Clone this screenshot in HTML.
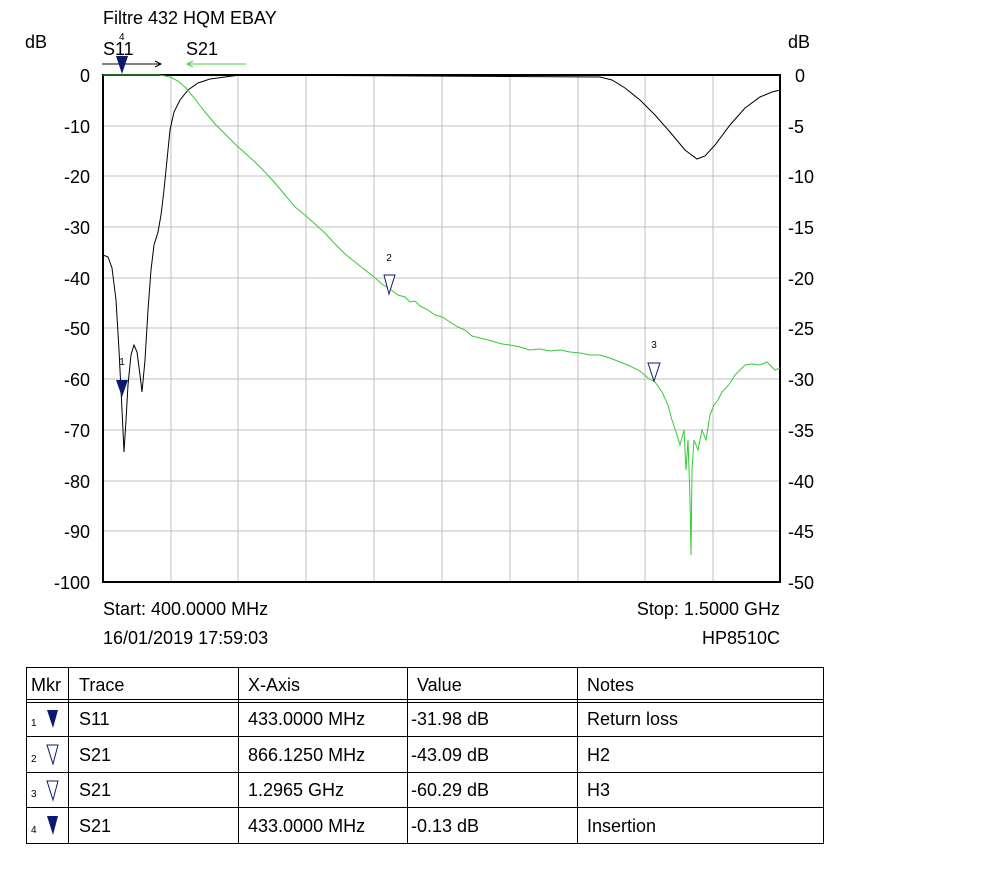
<!DOCTYPE html>
<html><head><meta charset="utf-8"><style>
html,body{margin:0;padding:0;background:#fff;width:1008px;height:880px;overflow:hidden}
text{font-family:"Liberation Sans",sans-serif;fill:#000}
</style></head><body>
<svg width="1008" height="880" xmlns="http://www.w3.org/2000/svg">
<!-- grid -->
<g stroke="#c0c0c0" stroke-width="1">
<line x1="171" y1="75" x2="171" y2="582"/><line x1="238" y1="75" x2="238" y2="582"/>
<line x1="306" y1="75" x2="306" y2="582"/><line x1="374" y1="75" x2="374" y2="582"/>
<line x1="442" y1="75" x2="442" y2="582"/><line x1="510" y1="75" x2="510" y2="582"/>
<line x1="578" y1="75" x2="578" y2="582"/><line x1="645" y1="75" x2="645" y2="582"/>
<line x1="713" y1="75" x2="713" y2="582"/>
<line x1="103" y1="126" x2="780" y2="126"/><line x1="103" y1="176" x2="780" y2="176"/>
<line x1="103" y1="227" x2="780" y2="227"/><line x1="103" y1="278" x2="780" y2="278"/>
<line x1="103" y1="328" x2="780" y2="328"/><line x1="103" y1="379" x2="780" y2="379"/>
<line x1="103" y1="430" x2="780" y2="430"/><line x1="103" y1="481" x2="780" y2="481"/>
<line x1="103" y1="531" x2="780" y2="531"/>
</g>
<rect x="103" y="75" width="677" height="507" fill="none" stroke="#000" stroke-width="2"/>
<!-- labels -->
<text x="103" y="24" font-size="18">Filtre 432 HQM EBAY</text>
<text x="25" y="48" font-size="18">dB</text>
<text x="788" y="48" font-size="18">dB</text>
<text x="103" y="55" font-size="18">S11</text>
<text x="186" y="55" font-size="18">S21</text>
<text x="119" y="40" font-size="10" fill="#666">4</text>
<line x1="102" y1="64" x2="160" y2="64" stroke="#000"/><path d="M155,61 L161,64 L155,67" fill="none" stroke="#000"/>
<line x1="188" y1="64" x2="246" y2="64" stroke="#4c4"/><path d="M193,61 L187,64 L193,67" fill="none" stroke="#4c4"/>
<g font-size="18" text-anchor="end">
<text x="90" y="82">0</text><text x="90" y="133">-10</text><text x="90" y="183">-20</text>
<text x="90" y="234">-30</text><text x="90" y="285">-40</text><text x="90" y="335">-50</text>
<text x="90" y="386">-60</text><text x="90" y="437">-70</text><text x="90" y="488">-80</text>
<text x="90" y="538">-90</text><text x="90" y="589">-100</text>
</g>
<g font-size="18">
<text x="795" y="82">0</text><text x="788" y="133">-5</text><text x="788" y="183">-10</text>
<text x="788" y="234">-15</text><text x="788" y="285">-20</text><text x="788" y="335">-25</text>
<text x="788" y="386">-30</text><text x="788" y="437">-35</text><text x="788" y="488">-40</text>
<text x="788" y="538">-45</text><text x="788" y="589">-50</text>
</g>
<text x="103" y="615" font-size="18">Start: 400.0000 MHz</text>
<text x="103" y="644" font-size="18">16/01/2019 17:59:03</text>
<text x="780" y="615" font-size="18" text-anchor="end">Stop: 1.5000 GHz</text>
<text x="780" y="644" font-size="18" text-anchor="end">HP8510C</text>
<!-- S11 -->
<polyline fill="none" stroke="#000" stroke-width="1" points="103,255 108,257 112,268 116,300 119,350 122,410 124,452 126,420 128,385 131,355 134,345 137,352 140,375 142,392 145,360 148,310 151,270 154,245 158,232 161,215 164,190 167,160 170,130 174,112 180,100 188,90 198,83 210,79 225,77 240,75 600,77 612,80 625,88 640,100 655,115 670,132 685,150 697,159 705,156 715,145 730,125 745,108 760,97 772,92 780,90"/>
<!-- S21 -->
<polyline fill="none" stroke="#3c3" stroke-width="1" points="103,75 160,75 170,77 178,81 186,88 195,99 205,112 215,124 225,134 235,144 245,153 255,162 265,172 275,183 285,195 295,207 305,215 315,224 325,233 335,244 345,254 355,262 365,270 374,277 382,284 390,289 398,295 405,297 410,302 415,301 420,306 428,310 435,315 442,317 450,322 458,327 465,330 472,336 480,338 488,340 495,342 502,344 510,345 520,347 530,350 540,349 550,351 560,350 570,352 580,353 590,355 600,355 610,358 620,362 630,366 640,371 648,378 655,382 662,392 668,405 672,420 676,432 680,445 684,430 686,470 688,440 690,500 691,555 692,470 694,440 698,450 702,430 706,440 710,415 714,405 718,400 722,392 726,388 730,383 735,375 740,370 745,365 752,364 760,365 767,362 775,370 780,368"/>
<!-- markers -->
<path d="M116,56 L128,56 L122,74 Z" fill="#0c1a6e"/>
<path d="M116,380 L128,380 L122,397 Z" fill="#0c1a6e"/>
<text x="122" y="365" font-size="10" text-anchor="middle" fill="#0c1a6e">1</text>
<path d="M384,275 L395,275 L389,294 Z" fill="#fff" stroke="#0c1a6e"/>
<text x="389" y="261" font-size="10" text-anchor="middle" fill="#0c1a6e">2</text>
<path d="M648,363 L660,363 L654,381 Z" fill="#fff" stroke="#0c1a6e"/>
<text x="654" y="348" font-size="10" text-anchor="middle" fill="#0c1a6e">3</text>
<!-- table -->
<g stroke="#000" stroke-width="1" fill="none">
<rect x="26.5" y="667.5" width="797" height="176"/>
<line x1="26" y1="699.5" x2="824" y2="699.5"/><line x1="26" y1="702.5" x2="824" y2="702.5"/>
<line x1="26" y1="736.5" x2="824" y2="736.5"/><line x1="26" y1="772.5" x2="824" y2="772.5"/>
<line x1="26" y1="807.5" x2="824" y2="807.5"/>
<line x1="68.5" y1="667" x2="68.5" y2="844"/><line x1="238.5" y1="667" x2="238.5" y2="844"/>
<line x1="407.5" y1="667" x2="407.5" y2="844"/><line x1="577.5" y1="667" x2="577.5" y2="844"/>
</g>
<g font-size="18">
<text x="31" y="691">Mkr</text><text x="79" y="691">Trace</text><text x="248" y="691">X-Axis</text>
<text x="417" y="691">Value</text><text x="587" y="691">Notes</text>
<text x="79" y="725">S11</text><text x="248" y="725">433.0000 MHz</text><text x="411" y="725">-31.98 dB</text><text x="587" y="725">Return loss</text>
<text x="79" y="761">S21</text><text x="248" y="761">866.1250 MHz</text><text x="411" y="761">-43.09 dB</text><text x="587" y="761">H2</text>
<text x="79" y="796">S21</text><text x="248" y="796">1.2965 GHz</text><text x="411" y="796">-60.29 dB</text><text x="587" y="796">H3</text>
<text x="79" y="832">S21</text><text x="248" y="832">433.0000 MHz</text><text x="411" y="832">-0.13 dB</text><text x="587" y="832">Insertion</text>
</g>
<g font-size="10" fill="#0c1a6e">
<text x="31" y="726" fill="#0c1a6e">1</text><text x="31" y="762" fill="#0c1a6e">2</text>
<text x="31" y="797" fill="#0c1a6e">3</text><text x="31" y="833" fill="#0c1a6e">4</text>
</g>
<path d="M47,710 L58,710 L53,728 Z" fill="#0c1a6e"/>
<path d="M47,745 L58,745 L53,764 Z" fill="#fff" stroke="#0c1a6e"/>
<path d="M47,781 L58,781 L53,800 Z" fill="#fff" stroke="#0c1a6e"/>
<path d="M47,816 L58,816 L53,835 Z" fill="#0c1a6e"/>
</svg>
</body></html>
